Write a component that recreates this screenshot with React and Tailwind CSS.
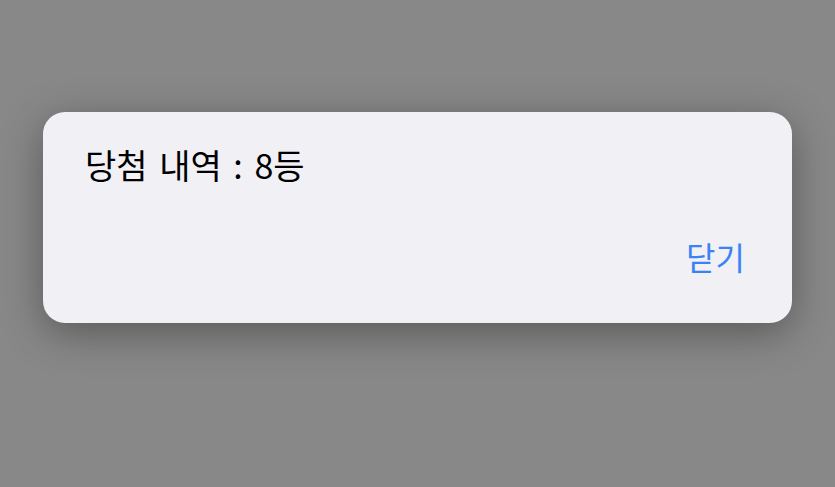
export default function App() {
  return (
    <div
      className="flex h-[487px] w-full justify-center bg-[#888888] pt-[112px]"
      style={{ fontFamily: '"Noto Sans CJK KR", "Noto Sans", sans-serif' }}
    >
      <div className="flex h-[211px] w-[749px] flex-col rounded-[22px] bg-[#f1f0f5] pl-[42px] pr-[47px] pt-[36px] shadow-[0_10px_40px_rgba(0,0,0,0.35)]">
        <p className="text-[34px] leading-[34px] text-black [word-spacing:4px]">당첨 내역 : 8등</p>
        <div className="mt-[58px] flex justify-end">
          <button type="button" className="text-[32px] leading-[32px] text-[#3a82f6]">
            닫기
          </button>
        </div>
      </div>
    </div>
  );
}
